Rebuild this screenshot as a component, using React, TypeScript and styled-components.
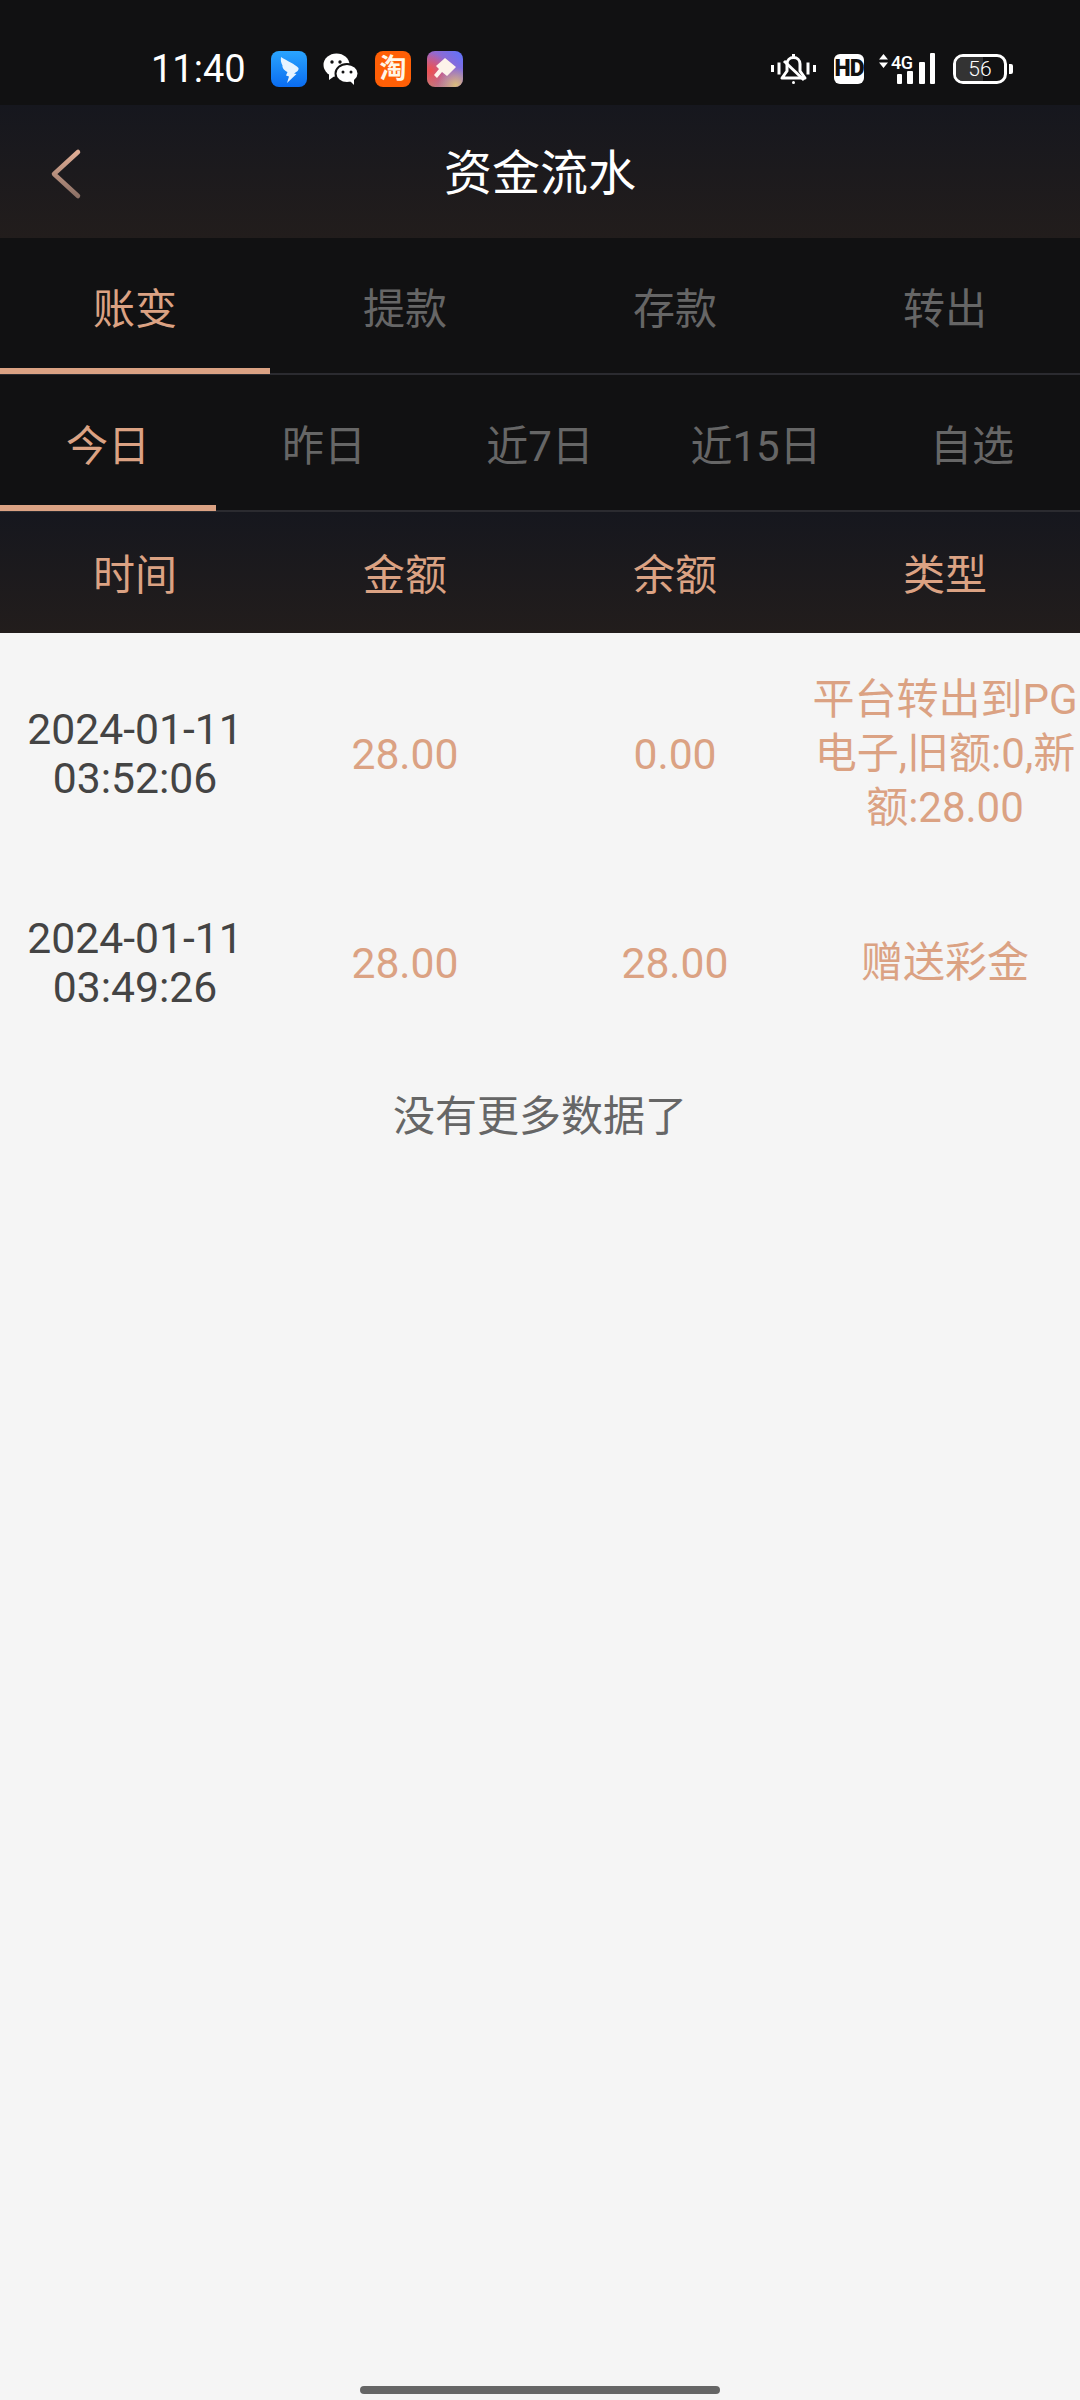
import styled, { createGlobalStyle } from "styled-components";
import { useState } from "react";

const ACCENT = "#dba283";

const GlobalStyle = createGlobalStyle`
  html, body {
    margin: 0;
    padding: 0;
    background: #f5f5f5;
  }
  body {
    font-family: Roboto, "Noto Sans CJK SC", sans-serif;
  }
  * {
    box-sizing: border-box;
  }
`;

const Page = styled.div`
  position: relative;
  width: 1080px;
  height: 2400px;
  overflow: hidden;
  background: #f5f5f5;
`;

const StatusBar = styled.div`
  display: flex;
  align-items: center;
  justify-content: space-between;
  height: 105px;
  padding: 32px 67px 0 151px;
  background: #111112;
`;

const StatusLeft = styled.div`
  display: flex;
  align-items: center;
`;

const Clock = styled.span`
  width: 120px;
  color: #fff;
  font-size: 38px;
  line-height: 40px;
`;

const AppIcons = styled.div`
  display: flex;
  align-items: center;
  gap: 16px;
`;

const AppSvg = styled.svg`
  display: block;
  width: 36px;
  height: 36px;
`;

const TaobaoBadge = styled.span`
  display: flex;
  align-items: center;
  justify-content: center;
  width: 36px;
  height: 36px;
  border-radius: 8px;
  background: #ff5f06;
  color: #fff6e8;
  font-size: 27px;
  font-weight: 700;
  line-height: 36px;
`;

const StatusRight = styled.div`
  display: flex;
  align-items: center;
`;

const BellSvg = styled.svg`
  display: block;
  width: 46px;
  height: 32px;
  margin-right: 17px;
`;

const HdBadge = styled.span`
  display: flex;
  align-items: center;
  justify-content: center;
  width: 30px;
  height: 30px;
  margin-right: 15px;
  border-radius: 6px;
  background: #fff;
  color: #111;
  font-size: 23px;
  font-weight: 900;
  letter-spacing: -1px;
  line-height: 30px;
`;

const Signal = styled.div`
  position: relative;
  width: 57px;
  height: 31px;
  margin-right: 17px;
`;

const SignalSvg = styled.svg`
  display: block;
  width: 57px;
  height: 31px;
`;

const NetworkLabel = styled.span`
  position: absolute;
  top: 1px;
  left: 12px;
  color: #fff;
  font-size: 18px;
  font-weight: 500;
  line-height: 18px;
  letter-spacing: -0.5px;
`;

const Battery = styled.div`
  display: flex;
  align-items: center;
  gap: 2px;
`;

const BatteryBody = styled.div`
  position: relative;
  display: flex;
  align-items: center;
  justify-content: center;
  width: 54px;
  height: 30px;
  border: 3px solid #fff;
  border-radius: 10px;
  overflow: hidden;
  color: #fff;
  font-size: 21px;
  font-weight: 300;
  line-height: 24px;
`;

const BatteryLevel = styled.span<{ $level: number }>`
  position: absolute;
  top: 0;
  bottom: 0;
  left: 0;
  width: ${(p) => p.$level}%;
  background: #333;
`;

const BatteryText = styled.span`
  position: relative;
`;

const BatteryNub = styled.span`
  width: 4px;
  height: 10px;
  border-radius: 0 2px 2px 0;
  background: #fff;
`;

const NavBar = styled.header`
  display: grid;
  grid-template-columns: 1fr auto 1fr;
  align-items: center;
  height: 133px;
  padding-top: 5px;
  background: linear-gradient(180deg, #16171e 0%, #221d1c 100%);
`;

const BackButton = styled.button`
  justify-self: start;
  display: flex;
  margin: 0 0 0 50px;
  padding: 0;
  border: 0;
  background: none;
`;

const Title = styled.h1`
  margin: 0;
  color: #fff;
  font-size: 48px;
  font-weight: 400;
  line-height: 56px;
`;

const TabRow = styled.div`
  display: flex;
  height: 137px;
  background: #111112;
  border-bottom: 2px solid #2b2b30;
`;

const Tab = styled.button<{ $active?: boolean }>`
  position: relative;
  flex: 1;
  padding: 8px 0 0;
  border: 0;
  background: none;
  color: ${(p) => (p.$active ? ACCENT : "#666")};
  font-family: inherit;
  font-size: 42px;
  line-height: 50px;

  &::after {
    content: "";
    display: ${(p) => (p.$active ? "block" : "none")};
    position: absolute;
    left: 0;
    right: 0;
    bottom: -1px;
    height: 6px;
    background: ${ACCENT};
  }
`;

const TableHead = styled.div`
  display: grid;
  grid-template-columns: repeat(4, 1fr);
  align-items: center;
  height: 121px;
  padding-top: 6px;
  background: linear-gradient(180deg, #16171e 0%, #221d1c 100%);
`;

const HeadCell = styled.div`
  color: ${ACCENT};
  font-size: 42px;
  line-height: 50px;
  text-align: center;
`;

const Row = styled.div<{ $height: number }>`
  display: grid;
  grid-template-columns: repeat(4, 1fr);
  align-items: center;
  height: ${(p) => p.$height}px;
`;

const DateCell = styled.div`
  color: #444;
  font-size: 42.67px;
  line-height: 49px;
  text-align: center;
`;

const AmountCell = styled.div`
  color: ${ACCENT};
  font-size: 42.67px;
  line-height: 54px;
  text-align: center;
`;

const TypeCell = styled.div`
  color: ${ACCENT};
  font-size: 42px;
  line-height: 54px;
  text-align: center;
`;

const NoMore = styled.div`
  margin-top: 40px;
  color: #666;
  font-size: 42px;
  line-height: 50px;
  text-align: center;
`;

const HomeBar = styled.div`
  position: absolute;
  left: 360px;
  bottom: 6px;
  width: 360px;
  height: 8px;
  border-radius: 4px;
  background: #666;
`;

const Chevron = () => (
  <svg width="34" height="56" viewBox="0 0 34 56" fill="none">
    <defs>
      <linearGradient id="chevronFill" x1="0" y1="0" x2="0" y2="1">
        <stop offset="0" stopColor="#e0ad94" />
        <stop offset="1" stopColor="#8d7166" />
      </linearGradient>
    </defs>
    <path
      d="M28 6 L4 28 L28 50"
      stroke="url(#chevronFill)"
      strokeWidth="4.5"
      strokeLinecap="round"
      strokeLinejoin="round"
    />
  </svg>
);

const DingIcon = () => (
  <AppSvg viewBox="0 0 36 36">
    <defs>
      <linearGradient id="dingBlue" x1="0" y1="0" x2="0" y2="1">
        <stop offset="0" stopColor="#2aa5ff" />
        <stop offset="1" stopColor="#0a6cf0" />
      </linearGradient>
    </defs>
    <rect width="36" height="36" rx="8" fill="url(#dingBlue)" />
    <path
      d="M10 6 C16 10 24 13 27.5 17 C28 19.5 25.5 21 23 22.5 L25.5 23 L16 32 L18 25.5 L15 24.5 L16.5 21 C13.5 19.5 11 17 11.5 14.5 C10 12 9.5 9 10 6 Z"
      fill="#e6f3ff"
    />
  </AppSvg>
);

const WechatIcon = () => (
  <AppSvg viewBox="0 0 36 36">
    <ellipse cx="13.5" cy="14" rx="13" ry="11.5" fill="#fff" />
    <path d="M6 21 L6 29 L13 24 Z" fill="#fff" />
    <ellipse cx="24" cy="22.5" rx="11.5" ry="9.5" stroke="#111112" strokeWidth="2" fill="#fff" />
    <path d="M27 30 L31 34 L31 27 Z" fill="#fff" />
    <circle cx="9" cy="11" r="1.7" fill="#111112" />
    <circle cx="17" cy="11" r="1.7" fill="#111112" />
    <circle cx="20" cy="21" r="1.5" fill="#111112" />
    <circle cx="28" cy="21" r="1.5" fill="#111112" />
  </AppSvg>
);

const MarkerIcon = () => (
  <AppSvg viewBox="0 0 36 36">
    <defs>
      <linearGradient id="markerBase" x1="1" y1="0" x2="0" y2="1">
        <stop offset="0" stopColor="#5b74ff" />
        <stop offset="0.55" stopColor="#a566c0" />
        <stop offset="1" stopColor="#c9806c" />
      </linearGradient>
      <radialGradient id="markerRed" cx="0.1" cy="0.55" r="0.5">
        <stop offset="0" stopColor="#ef4f4f" />
        <stop offset="1" stopColor="#ef4f4f" stopOpacity="0" />
      </radialGradient>
      <radialGradient id="markerGold" cx="0.8" cy="0.95" r="0.5">
        <stop offset="0" stopColor="#d9bd7c" />
        <stop offset="1" stopColor="#d9bd7c" stopOpacity="0" />
      </radialGradient>
    </defs>
    <rect width="36" height="36" rx="8" fill="url(#markerBase)" />
    <rect width="36" height="36" rx="8" fill="url(#markerRed)" />
    <rect width="36" height="36" rx="8" fill="url(#markerGold)" />
    <path d="M18 7 L29 16 L20 25 L15 21 L10 27 L7 24 L12 18 L9 15 Z" fill="#fdf3ea" strokeLinejoin="round" />
  </AppSvg>
);

const MutedBell = () => (
  <BellSvg viewBox="0 0 46 32" fill="none" stroke="#fff" strokeWidth="3">
    <path d="M1.5 12 V19 M8 9.5 V21.5 M37 9.5 V21.5 M43.5 12 V19" />
    <path d="M11 25 H34 L29 18 V11 C29 7 26 4.5 22.5 4.5 C19 4.5 16 7 16 11 V18 Z" strokeLinejoin="round" />
    <path d="M13 8 L33 27" />
    <circle cx="22.5" cy="29.5" r="1.5" fill="#fff" stroke="none" />
    <path d="M22.5 1 V4" />
  </BellSvg>
);

const SignalBars = () => (
  <SignalSvg viewBox="0 0 57 31" fill="#fff">
    <path d="M4.5 1 L9 6.5 H0 Z M4.5 15 L0 9.5 H9 Z" />
    <rect x="18" y="21" width="5" height="10" rx="1" />
    <rect x="28" y="18" width="6" height="13" rx="1" />
    <rect x="40" y="9" width="6" height="22" rx="1" />
    <rect x="51" y="0" width="5" height="31" rx="1" />
  </SignalSvg>
);

const accountTabs = ["账变", "提款", "存款", "转出"];
const dateTabs = ["今日", "昨日", "近7日", "近15日", "自选"];

const records = [
  {
    time: ["2024-01-11", "03:52:06"],
    amount: "28.00",
    balance: "0.00",
    type: "平台转出到PG电子,旧额:0,新额:28.00",
    height: 241,
  },
  {
    time: ["2024-01-11", "03:49:26"],
    amount: "28.00",
    balance: "28.00",
    type: "赠送彩金",
    height: 178,
  },
];

export default function App() {
  const [account, setAccount] = useState(0);
  const [range, setRange] = useState(0);

  return (
    <Page>
      <GlobalStyle />
      <StatusBar>
        <StatusLeft>
          <Clock>11:40</Clock>
          <AppIcons>
            <DingIcon />
            <WechatIcon />
            <TaobaoBadge>淘</TaobaoBadge>
            <MarkerIcon />
          </AppIcons>
        </StatusLeft>
        <StatusRight>
          <MutedBell />
          <HdBadge>HD</HdBadge>
          <Signal>
            <SignalBars />
            <NetworkLabel>4G</NetworkLabel>
          </Signal>
          <Battery>
            <BatteryBody>
              <BatteryLevel $level={56} />
              <BatteryText>56</BatteryText>
            </BatteryBody>
            <BatteryNub />
          </Battery>
        </StatusRight>
      </StatusBar>

      <NavBar>
        <BackButton aria-label="返回">
          <Chevron />
        </BackButton>
        <Title>资金流水</Title>
      </NavBar>

      <TabRow>
        {accountTabs.map((label, i) => (
          <Tab key={label} $active={i === account} onClick={() => setAccount(i)}>
            {label}
          </Tab>
        ))}
      </TabRow>
      <TabRow>
        {dateTabs.map((label, i) => (
          <Tab key={label} $active={i === range} onClick={() => setRange(i)}>
            {label}
          </Tab>
        ))}
      </TabRow>

      <TableHead>
        <HeadCell>时间</HeadCell>
        <HeadCell>金额</HeadCell>
        <HeadCell>余额</HeadCell>
        <HeadCell>类型</HeadCell>
      </TableHead>

      {records.map((record) => (
        <Row key={record.time[1]} $height={record.height}>
          <DateCell>
            {record.time[0]}
            <br />
            {record.time[1]}
          </DateCell>
          <AmountCell>{record.amount}</AmountCell>
          <AmountCell>{record.balance}</AmountCell>
          <TypeCell>{record.type}</TypeCell>
        </Row>
      ))}

      <NoMore>没有更多数据了</NoMore>
      <HomeBar />
    </Page>
  );
}
